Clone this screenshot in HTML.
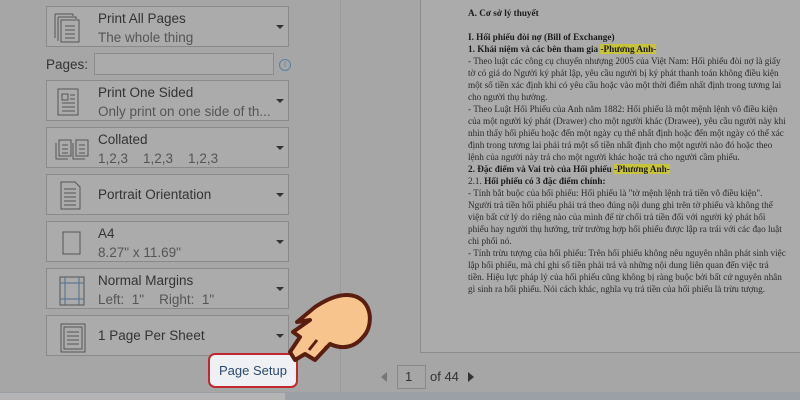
<!DOCTYPE html>
<html><head><meta charset="utf-8"><style>
body{margin:0;width:800px;height:400px;overflow:hidden;background:#a6a6a6;font-family:"Liberation Sans",sans-serif;position:relative}
.box{position:absolute;left:46px;width:243px;height:41px;border:1px solid #8a8a8a;background:#ababab;box-sizing:border-box}
.box .t1{position:absolute;left:51px;top:4px;font-size:13.5px;color:#333}
.box .t2{position:absolute;left:51px;top:23px;font-size:13.5px;color:#555}
.box .one{position:absolute;left:51px;top:12px;font-size:13.5px;color:#333}
.box .ar{position:absolute;left:229px;top:18px;width:0;height:0;border-left:4px solid transparent;border-right:4px solid transparent;border-top:4px solid #333}
.box svg{position:absolute;left:6px;top:5px}
.doc{position:absolute;left:420px;top:-2px;width:390px;height:353px;border:1px solid #8c8c8c;background:#ababab}
.txt{position:absolute;left:468px;top:7px;font-family:"Liberation Serif",serif;font-size:9.2px;line-height:12px;color:#2a2a2a;white-space:nowrap}
.txt b{color:#1a1a1a}
.hl{background:#c8c43a}
</style></head><body>
<div style="position:absolute;left:340px;top:0;width:1px;height:392px;background:#999"></div>
<div style="position:absolute;left:0;top:392px;width:800px;height:8px;background:#9aa0a6"></div>
<div style="position:absolute;left:0;top:393px;width:285px;height:7px;background:#b4b4b4"></div>

<div class="box" style="top:6px"><svg width="36" height="32"><g fill="none" stroke="#555"><rect x="8" y="8" width="18" height="22"/><path d="M5 5h18v2M2 2h18v2M2 2v24M5 5v24"/><path d="M12 14h10M12 18h10M12 22h10M12 26h10"/></g></svg><div class="t1">Print All Pages</div><div class="t2">The whole thing</div><div class="ar"></div></div>
<div style="position:absolute;left:46px;top:57px;font-size:13.5px;color:#333">Pages:</div>
<div style="position:absolute;left:94px;top:53px;width:180px;height:22px;border:1px solid #8a8a8a;box-sizing:border-box;background:#ababab"></div>
<div style="position:absolute;left:279px;top:59px;width:10px;height:10px;border:1px solid #5b7fa8;border-radius:50%;font-size:8px;color:#5b7fa8;text-align:center;line-height:10px">i</div>
<div class="box" style="top:80px"><svg width="36" height="32"><g fill="none" stroke="#555"><rect x="5" y="3" width="20" height="26"/><rect x="9" y="8" width="6" height="6"/><path d="M17 9h5M17 13h5M9 17h13M9 21h13M9 25h13"/></g></svg><div class="t1">Print One Sided</div><div class="t2">Only print on one side of th...</div><div class="ar"></div></div>
<div class="box" style="top:127px"><svg width="40" height="32"><g fill="none" stroke="#555"><rect x="6" y="7" width="12" height="16"/><rect x="23" y="7" width="12" height="16"/><path d="M3 10v16h12M20 10v16h12"/><path d="M9 12h6M9 16h6M9 20h6M26 12h6M26 16h6M26 20h6"/></g></svg><div class="t1">Collated</div><div class="t2">1,2,3&nbsp;&nbsp;&nbsp; 1,2,3&nbsp;&nbsp;&nbsp; 1,2,3</div><div class="ar"></div></div>
<div class="box" style="top:174px"><svg width="36" height="32"><g fill="none" stroke="#555"><path d="M8 2h14l5 5v22H8z"/><path d="M11 9h12M11 13h12M11 17h12M11 21h12M11 25h12"/></g></svg><div class="one">Portrait Orientation</div><div class="ar"></div></div>
<div class="box" style="top:221px"><svg width="36" height="32"><rect x="10" y="5" width="17" height="22" fill="none" stroke="#555"/></svg><div class="t1">A4</div><div class="t2">8.27" x 11.69"</div><div class="ar"></div></div>
<div class="box" style="top:268px"><svg width="36" height="32"><g fill="none" stroke="#555"><rect x="7" y="3" width="24" height="28"/></g><g stroke="#4d6f8f" fill="none"><path d="M12 3v28M26 3v28M7 9h24M7 25h24"/></g></svg><div class="t1">Normal Margins</div><div class="t2">Left:&nbsp; 1"&nbsp;&nbsp;&nbsp; Right:&nbsp; 1"</div><div class="ar"></div></div>
<div class="box" style="top:315px"><svg width="36" height="32"><g fill="none" stroke="#555"><rect x="8" y="3" width="24" height="28"/><rect x="11" y="6" width="18" height="22"/><path d="M14 11h12M14 15h12M14 19h12M14 23h12"/></g></svg><div class="one">1 Page Per Sheet</div><div class="ar"></div></div>

<div style="position:absolute;left:208px;top:353px;width:90px;height:35px;border:2px solid #c0282e;border-radius:7px;box-sizing:border-box;background:#eef0f3;font-size:13px;color:#2b4a6e;text-align:center;line-height:31px">Page Setup</div>

<svg style="position:absolute;left:285px;top:292px" width="90" height="80"><path d="M30 15 C45 5 60 0 72 5 C88 12 88 35 78 45 C70 55 58 58 45 52 L30 68 L20 62 L10 68 L5 60 L15 45 L8 40 L25 28 L12 30 Z" fill="#f8c48e" stroke="#5a1e10" stroke-width="4" stroke-linejoin="round"/><path d="M32 48 L24 58 M42 54 L34 64" stroke="#5a1e10" stroke-width="3"/></svg>

<div class="doc"></div>
<div class="txt">
<b>A. Cơ sở lý thuyết</b><br><br>
<b>I. Hối phiếu đòi nợ (Bill of Exchange)</b><br>
<b>1. Khái niệm và các bên tham gia <span class="hl">-Phương Anh-</span></b><br>
- Theo luật các công cụ chuyển nhượng 2005 của Việt Nam: Hối phiếu đòi nợ là giấy<br>
tờ có giá do Người ký phát lập, yêu cầu người bị ký phát thanh toán không điều kiện<br>
một số tiền xác định khi có yêu cầu hoặc vào một thời điểm nhất định trong tương lai<br>
cho người thụ hưởng.<br>
- Theo Luật Hối Phiếu của Anh năm 1882: Hối phiếu là một mệnh lệnh vô điều kiện<br>
của một người ký phát (Drawer) cho một người khác (Drawee), yêu cầu người này khi<br>
nhìn thấy hối phiếu hoặc đến một ngày cụ thể nhất định hoặc đến một ngày có thể xác<br>
định trong tương lai phải trả một số tiền nhất định cho một người nào đó hoặc theo<br>
lệnh của người này trả cho một người khác hoặc trả cho người cầm phiếu.<br>
<b>2. Đặc điểm và Vai trò của Hối phiếu <span class="hl">-Phương Anh-</span></b><br>
2.1. <b>Hối phiếu có 3 đặc điểm chính:</b><br>
- Tính bắt buộc của hối phiếu: Hối phiếu là "tờ mệnh lệnh trả tiền vô điều kiện".<br>
Người trả tiền hối phiếu phải trả theo đúng nội dung ghi trên tờ phiếu và không thể<br>
viện bất cứ lý do riêng nào của mình để từ chối trả tiền đối với người ký phát hối<br>
phiếu hay người thụ hưởng, trừ trường hợp hối phiếu được lập ra trái với các đạo luật<br>
chi phối nó.<br>
- Tính trừu tượng của hối phiếu: Trên hối phiếu không nêu nguyên nhân phát sinh việc<br>
lập hối phiếu, mà chỉ ghi số tiền phải trả và những nội dung liên quan đến việc trả<br>
tiền. Hiệu lực pháp lý của hối phiếu cũng không bị ràng buộc bởi bất cứ nguyên nhân<br>
gì sinh ra hối phiếu. Nói cách khác, nghĩa vụ trả tiền của hối phiếu là trừu tượng.
</div>

<div style="position:absolute;left:381px;top:372px;width:0;height:0;border-top:5px solid transparent;border-bottom:5px solid transparent;border-right:6px solid #777"></div>
<div style="position:absolute;left:397px;top:365px;width:29px;height:24px;border:1px solid #888;box-sizing:border-box;font-size:13px;color:#333;padding-left:7px;line-height:22px">1</div>
<div style="position:absolute;left:430px;top:369px;font-size:13px;color:#333">of 44</div>
<div style="position:absolute;left:468px;top:372px;width:0;height:0;border-top:5px solid transparent;border-bottom:5px solid transparent;border-left:6px solid #333"></div>
</body></html>
